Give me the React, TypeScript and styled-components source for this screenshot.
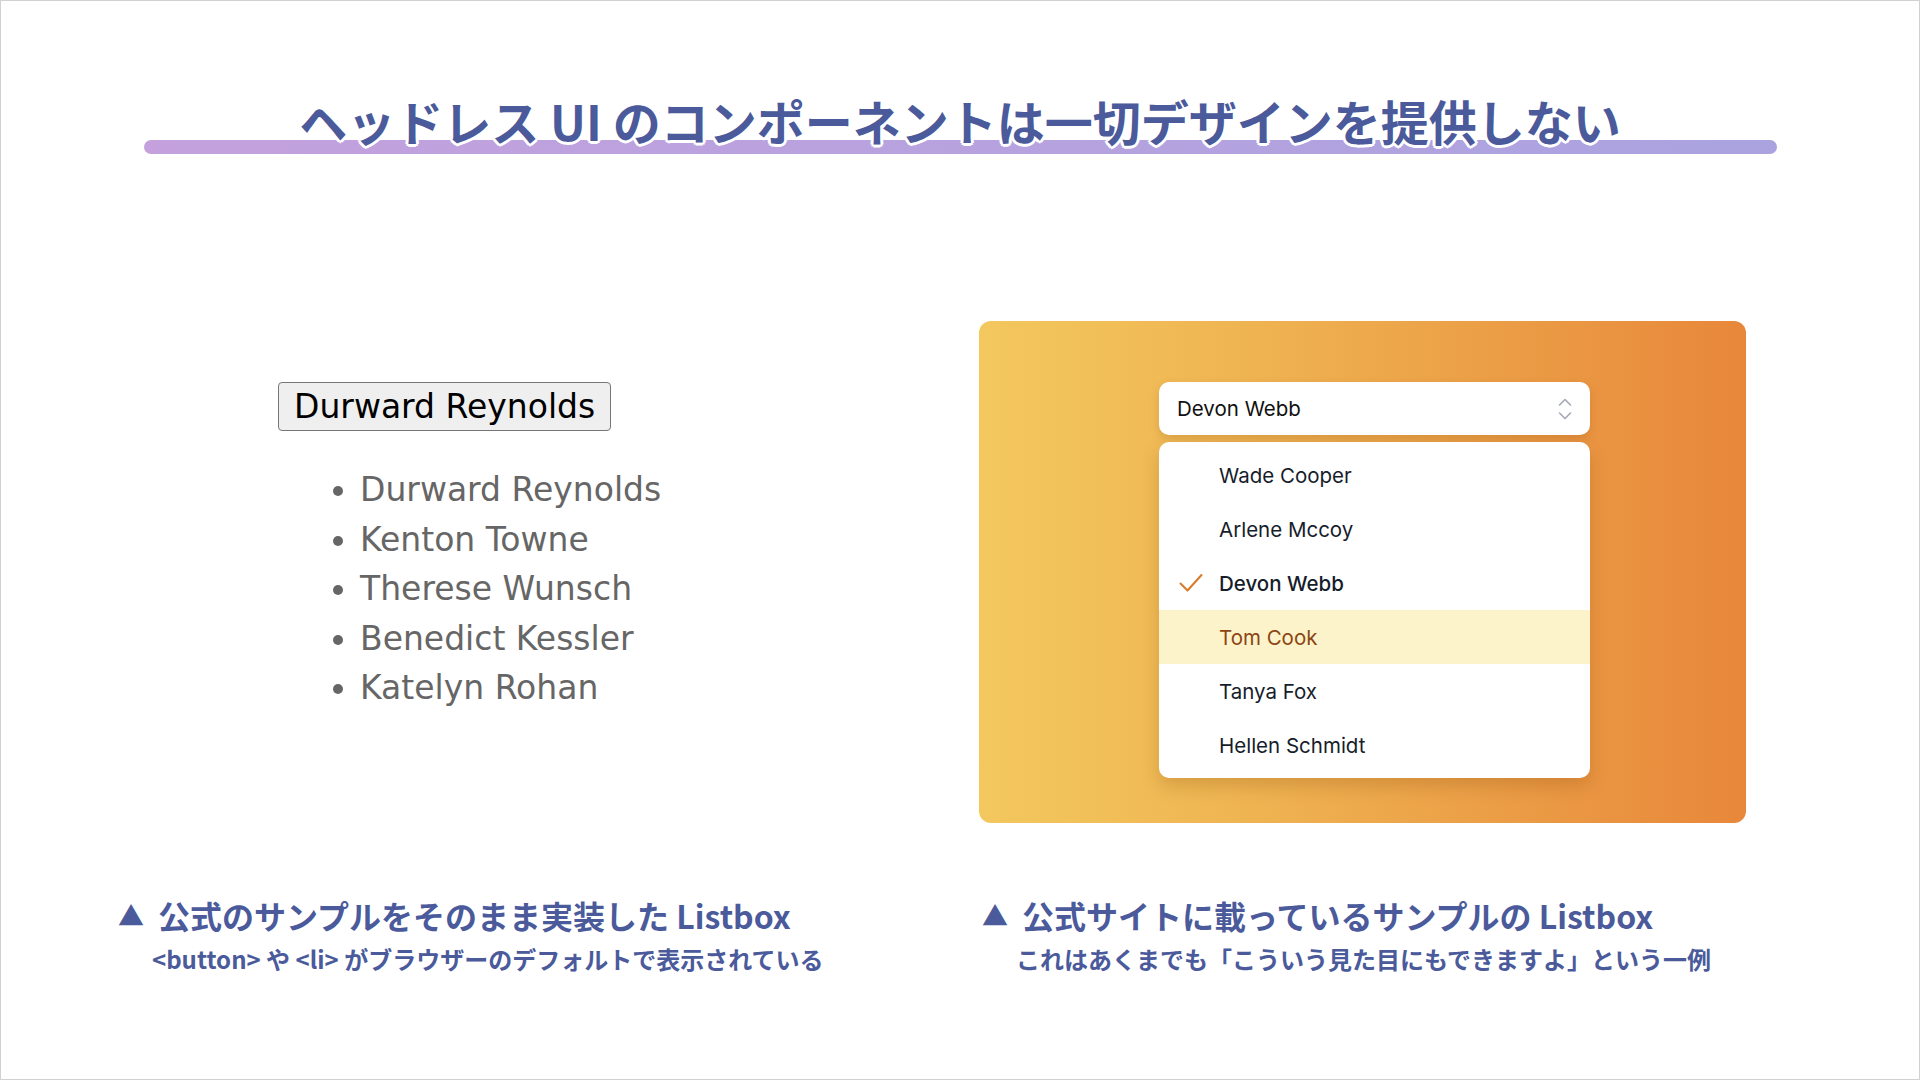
import React from 'react';
import styled, { createGlobalStyle } from 'styled-components';

const GlobalStyle = createGlobalStyle`
  html, body {
    margin: 0;
    padding: 0;
    background: #fff;
  }
  * {
    box-sizing: border-box;
  }
`;

const people = ['Durward Reynolds', 'Kenton Towne', 'Therese Wunsch', 'Benedict Kessler', 'Katelyn Rohan'];

const options = [
  { name: 'Wade Cooper' },
  { name: 'Arlene Mccoy' },
  { name: 'Devon Webb', selected: true },
  { name: 'Tom Cook', active: true },
  { name: 'Tanya Fox' },
  { name: 'Hellen Schmidt' },
];

const App = () => {
  return (
    <Slide>
      <GlobalStyle />
      <Header>
        <Title>ヘッドレス UI のコンポーネントは一切デザインを提供しない</Title>
      </Header>

      <Columns $top={177}>
        <PlainDemo>
          <NativeButton>Durward Reynolds</NativeButton>
          <PlainList>
            {people.map((p) => (
              <li key={p}>{p}</li>
            ))}
          </PlainList>
        </PlainDemo>

        <Showcase>
          <SelectButton>
            <span>Devon Webb</span>
            <svg width="16" height="26" viewBox="0 0 16 26" fill="none">
              <polyline points="2.5,9 8,3.5 13.5,9" stroke="#a3a8b4" strokeWidth="1.6" strokeLinecap="round" strokeLinejoin="round" />
              <polyline points="2.5,17 8,22.5 13.5,17" stroke="#a3a8b4" strokeWidth="1.6" strokeLinecap="round" strokeLinejoin="round" />
            </svg>
          </SelectButton>
          <OptionPanel>
            {options.map((o) => (
              <Option key={o.name} $active={o.active} $selected={o.selected}>
                {o.selected && (
                  <CheckMark width="24" height="20" viewBox="0 0 24 20" fill="none">
                    <polyline points="1.5,10.5 8.5,17.5 22.5,2" stroke="#d9792a" strokeWidth="2" strokeLinecap="round" strokeLinejoin="round" />
                  </CheckMark>
                )}
                {o.name}
              </Option>
            ))}
          </OptionPanel>
        </Showcase>
      </Columns>

      <Columns $top={70}>
        <Caption>
          <CaptionHead>
            <Triangle>▲</Triangle>
            公式のサンプルをそのまま実装した Listbox
          </CaptionHead>
          <CaptionSub>&lt;button&gt; や &lt;li&gt; がブラウザーのデフォルトで表示されている</CaptionSub>
        </Caption>
        <Caption $shift>
          <CaptionHead>
            <Triangle>▲</Triangle>
            公式サイトに載っているサンプルの Listbox
          </CaptionHead>
          <CaptionSub>これはあくまでも「こういう見た目にもできますよ」という一例</CaptionSub>
        </Caption>
      </Columns>
    </Slide>
  );
};

const Slide = styled.div`
  width: 1920px;
  height: 1080px;
  border: 1px solid #d2d2d2;
  background: #fff;
  display: flex;
  flex-direction: column;
  font-family: 'Noto Sans CJK JP', sans-serif;
  color: #4a5a9b;
`;

const Header = styled.header`
  padding-top: 95px;
  display: flex;
  justify-content: center;
`;

const Title = styled.h1`
  position: relative;
  z-index: 0;
  width: 1633px;
  height: 48px;
  margin: 0;
  font-size: 48px;
  line-height: 48px;
  font-weight: 700;
  text-align: center;
  color: #4a5a9b;
  text-shadow:
    3px 0 0 #fff, -3px 0 0 #fff, 0 3px 0 #fff, 0 -3px 0 #fff,
    2px 2px 0 #fff, -2px 2px 0 #fff, 2px -2px 0 #fff, -2px -2px 0 #fff;

  &::before {
    content: '';
    position: absolute;
    z-index: -1;
    left: 0;
    right: 0;
    top: 44px;
    height: 14px;
    border-radius: 7px;
    background: linear-gradient(90deg, #c4a1dd, #aaa3e0);
  }
`;

const Columns = styled.div<{ $top: number }>`
  display: grid;
  grid-template-columns: 861px 767px;
  padding-left: 117px;
  margin-top: ${(p) => p.$top}px;
`;

const PlainDemo = styled.div`
  padding: 61px 0 0 160px;
  font-family: 'DejaVu Sans', 'Noto Sans CJK JP', sans-serif;
`;

const NativeButton = styled.button`
  height: 49px;
  padding: 0 15px;
  font-family: inherit;
  font-size: 33px;
  line-height: 1;
  color: #000;
  background: #efefef;
  border: 1px solid #767676;
  border-radius: 4px;
`;

const PlainList = styled.ul`
  margin: 34px 0 0;
  padding-left: 82px;
  color: #666;
  font-size: 33px;
  line-height: 49.6px;
`;

const Showcase = styled.div`
  height: 502px;
  border-radius: 12px;
  background: linear-gradient(90deg, #f3c85e 0%, #efb452 35%, #eb9c45 70%, #e8873a 100%);
  padding: 61px 0 0 180px;
  font-family: Inter, 'Noto Sans', sans-serif;
`;

const SelectButton = styled.div`
  width: 431px;
  height: 53px;
  border-radius: 10px;
  background: #fff;
  box-shadow: 0 4px 10px rgba(120, 60, 0, 0.18);
  display: flex;
  align-items: center;
  justify-content: space-between;
  padding: 0 17px 0 18px;
  font-size: 20.5px;
  color: #111;
`;

const OptionPanel = styled.ul`
  width: 431px;
  margin: 7px 0 0;
  padding: 6px 0;
  list-style: none;
  border-radius: 10px;
  background: #fff;
  box-shadow: 0 8px 18px rgba(120, 60, 0, 0.22);
`;

const Option = styled.li<{ $active?: boolean; $selected?: boolean }>`
  position: relative;
  height: 54px;
  display: flex;
  align-items: center;
  padding-left: 60px;
  font-size: 20.5px;
  font-weight: ${(p) => (p.$selected ? 500 : 400)};
  color: ${(p) => (p.$active ? '#8c4512' : '#161d2b')};
  background: ${(p) => (p.$active ? '#fcf3cb' : 'transparent')};
`;

const CheckMark = styled.svg`
  position: absolute;
  left: 20px;
  top: 17px;
`;

const Caption = styled.div<{ $shift?: boolean }>`
  padding-left: ${(p) => (p.$shift ? '3px' : '0')};
`;

const CaptionHead = styled.div`
  display: flex;
  align-items: center;
  font-size: 32px;
  line-height: 44px;
  font-weight: 700;
`;

const Triangle = styled.span`
  font-size: 26px;
  margin-right: 14px;
`;

const CaptionSub = styled.div`
  padding-left: 34px;
  font-size: 24px;
  line-height: 44px;
  font-weight: 700;
`;

export default App;
